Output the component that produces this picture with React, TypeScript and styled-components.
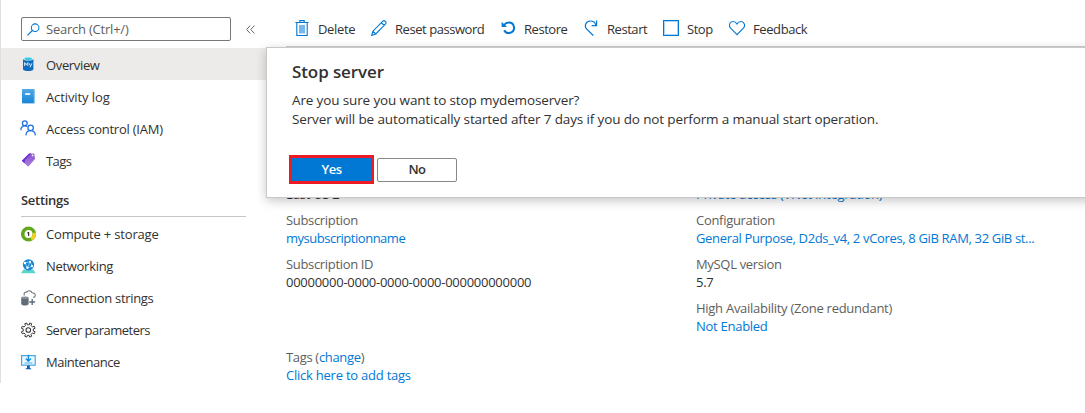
import React from "react";
import styled, { createGlobalStyle } from "styled-components";

const Global = createGlobalStyle`
  * { box-sizing: border-box; }
  body { margin: 0; background: #fff; overflow: hidden; }
  button { font: inherit; }
`;

const Page = styled.div`
  position: relative;
  display: flex;
  width: 1085px;
  height: 413px;
  overflow: hidden;
  background: #fff;
  color: #323130;
  font: 13px/18px "Open Sans", "Noto Sans", sans-serif;
`;

const Text = styled.span<{ $ls?: number }>`
  white-space: nowrap;
  letter-spacing: ${(p) => p.$ls ?? 0}px;
`;

const Caption = styled(Text)<{ $drop?: number }>`
  padding-top: ${(p) => p.$drop ?? 2}px;
`;

const Sidebar = styled.nav`
  width: 266px;
  height: 383px;
  border-left: 1px solid #e1dfdd;
  padding-top: 17px;
  flex: none;
`;

const SearchRow = styled.div`
  display: flex;
  align-items: center;
  height: 24px;
  margin: 0 0 7px 20px;
  gap: 15px;
`;

const SearchBox = styled.div`
  display: flex;
  align-items: center;
  width: 210px;
  height: 24px;
  padding-left: 5px;
  gap: 6px;
  border: 1px solid #7a7876;
  border-radius: 2px;
  color: #605e5c;
`;

const NavItem = styled.div<{ $active?: boolean }>`
  display: flex;
  align-items: center;
  height: 32px;
  padding-left: 19px;
  gap: 10px;
  background: ${(p) => (p.$active ? "#edebe9" : "transparent")};
`;

const SectionTitle = styled.div`
  display: flex;
  align-items: center;
  width: 225px;
  height: 41px;
  margin: 0 0 1px 20px;
  padding-top: 8px;
  border-bottom: 1px solid #c8c6c4;
  font-weight: 600;
`;

const Main = styled.main`
  flex: 1;
  padding-left: 20px;
`;

const Toolbar = styled.div`
  display: flex;
  align-items: center;
  height: 48px;
  padding: 10px 0 0 8px;
  border-bottom: 2px solid #d2d0ce;
`;

const Command = styled.div<{ $w: number }>`
  display: flex;
  align-items: center;
  flex: none;
  width: ${(p) => p.$w}px;
  gap: 8px;
`;

const Essentials = styled.div`
  display: grid;
  grid-template-columns: 410px 1fr;
  padding-top: 137px;
`;

const Field = styled.div<{ $before?: number; $height?: number }>`
  display: flex;
  flex-direction: column;
  height: ${(p) => p.$height ?? 44}px;
  margin-top: ${(p) => p.$before ?? 0}px;
`;

const Label = styled(Text)`
  color: #605e5c;
`;

const Link = styled(Text)`
  color: #0078d4;
`;

const Dialog = styled.section`
  position: absolute;
  left: 266px;
  top: 47px;
  width: 830px;
  height: 151px;
  padding: 13px 0 0 25px;
  background: #fff;
  border: 1px solid #c8c8c8;
  box-shadow: 0 3px 10px rgba(0, 0, 0, 0.22);
`;

const DialogTitle = styled.h2`
  margin: 0 0 8px;
  font-size: 17px;
  line-height: 22px;
  font-weight: 600;
`;

const DialogLine = styled.div`
  height: 19px;
  font-size: 13.5px;
  line-height: 19px;
`;

const Actions = styled.div`
  display: flex;
  align-items: center;
  gap: 3px;
  margin: 26px 0 0 -3px;
`;

const Highlight = styled.div`
  display: flex;
  width: 85px;
  height: 29px;
  border: 3px solid #ed1c24;
`;

const Button = styled.button<{ $primary?: boolean }>`
  width: ${(p) => (p.$primary ? 79 : 80)}px;
  height: ${(p) => (p.$primary ? 23 : 24)}px;
  padding: 0 0 1px;
  border: 1px solid ${(p) => (p.$primary ? "#0078d4" : "#8a8886")};
  border-radius: ${(p) => (p.$primary ? 0 : 2)}px;
  background: ${(p) => (p.$primary ? "#0078d4" : "#fff")};
  color: ${(p) => (p.$primary ? "#fff" : "#323130")};
  font-weight: 600;
  line-height: 20px;
  letter-spacing: -0.5px;
`;

const Svg = ({ size = 16, children }: { size?: number; children: React.ReactNode }) => (
  <svg width={size} height={size} viewBox="0 0 16 16" fill="none">
    {children}
  </svg>
);

const icons = {
  search: (
    <Svg size={13}>
      <circle cx="10" cy="5.8" r="4.7" stroke="#0078d4" strokeWidth="1.3" />
      <path d="M6.6 9.2.6 15.2" stroke="#0078d4" strokeWidth="1.4" />
    </Svg>
  ),
  mysql: (
    <Svg>
      <path d="M3 2.8v10.4c0 1 2.4 1.8 5.2 1.8s5.2-.8 5.2-1.8V2.8z" fill="#0f6cbd" />
      <ellipse cx="8.2" cy="2.8" rx="5.2" ry="1.8" fill="#e3f6fb" />
      <ellipse cx="8.2" cy="2.7" rx="4" ry="1.2" fill="#32c8e0" />
      <path d="M4.6 10V6.6l1.6 2.2 1.6-2.2V10M9.2 7.3l1.2 2.4m1.5-2.4-1.8 4" stroke="#d8ecfb" strokeWidth="1" />
    </Svg>
  ),
  log: (
    <Svg>
      <defs>
        <linearGradient id="logFill" x1="0" y1="0" x2="0" y2="1">
          <stop stopColor="#4fa9e6" />
          <stop offset="1" stopColor="#1b84d6" />
        </linearGradient>
      </defs>
      <rect x="2" y="1" width="13" height="14.8" rx="1" fill="#8cc4ec" />
      <rect x="2" y="1" width="11.8" height="14" rx=".8" fill="url(#logFill)" />
      <path d="M5.2 6h5" stroke="#fff" strokeWidth="1.7" />
    </Svg>
  ),
  people: (
    <Svg>
      <g stroke="#1f6fe0" strokeWidth="1.25">
        <circle cx="4.8" cy="3.3" r="2.4" />
        <circle cx="10.6" cy="7.9" r="2.7" />
        <path d="M.8 10.2C1 7.4 2.7 5.8 4.8 5.8c1 0 1.8.3 2.4.8M5.9 15.4c.2-3 2.2-4.7 4.7-4.7s4.5 1.7 4.8 4.7" />
      </g>
    </Svg>
  ),
  tag: (
    <Svg>
      <defs>
        <linearGradient id="tagFill" x1="0" y1="0" x2="0" y2="1">
          <stop stopColor="#8a4fd0" />
          <stop offset="1" stopColor="#a983dc" />
        </linearGradient>
      </defs>
      <path d="M9 2 14.2 1.4 15 7 8.2 14.8 2 9z" fill="url(#tagFill)" />
      <path d="M9 1.6 11.4.8 5 8.2 4.6 11.2 1.8 8.8z" fill="#6f2fd0" />
      <circle cx="12.6" cy="3.4" r=".9" fill="#fff" />
    </Svg>
  ),
  compute: (
    <Svg>
      <circle cx="8.5" cy="8" r="5.8" stroke="#62a81a" strokeWidth="3.6" />
      <path d="M14.2 6.8c.5 3-.8 5.3-3 6.3" stroke="#f5cf1a" strokeWidth="3.2" />
      <path d="M8.6 5.9v4.2M7.6 7.3l1-1.2" stroke="#323130" strokeWidth="1.2" />
    </Svg>
  ),
  network: (
    <Svg>
      <path d="M3.5 11.5h9.8l2.4 3.7H1z" fill="#5cd5c9" />
      <circle cx="8.5" cy="6.8" r="5.6" fill="#1784d8" />
      <path d="m5 4.8 5-1 2.2 4.2-4.8 2zM10 3.8 7.4 10" stroke="#9cddf8" strokeWidth=".8" />
      <g fill="#fff">
        <circle cx="5" cy="5" r="1.2" />
        <circle cx="10.1" cy="3.8" r="1" />
        <circle cx="12" cy="8.2" r="1.1" />
        <circle cx="7.4" cy="9.8" r="1.2" />
      </g>
    </Svg>
  ),
  strings: (
    <Svg>
      <path d="M4.4 5.4C3.4 3.3 5 1.8 6.8 2.1 7.8.4 11 .2 12 2.7c2.3.1 3.5 1.5 3.2 3.1-.2 1-1.1 1.6-2.1 1.7" stroke="#69737e" strokeWidth="1.1" />
      <path d="M1.2 7.7v6.2c0 .9 1.7 1.5 3.7 1.5s3.7-.6 3.7-1.5V7.7z" fill="#606d79" />
      <ellipse cx="4.9" cy="7.7" rx="3.7" ry="1.2" fill="#86909b" />
      <path d="M9.2 12h6M12.2 9v6" stroke="#606d79" strokeWidth="1.4" />
    </Svg>
  ),
  gear: (
    <Svg>
      <circle cx="8.3" cy="8" r="2.3" stroke="#3b3a39" strokeWidth="1.1" />
      <path d="m6.9 1 .4 1.8h2L9.7 1l2.1.8-.8 1.7 1.5 1.5 1.7-.8.9 2.1-1.8.6v2.2l1.8.6-.9 2.1-1.7-.8-1.5 1.5.8 1.7-2.1.9-.6-1.8H7.4l-.6 1.8-2.1-.9.8-1.7L4 11l-1.7.8-.9-2.1 1.8-.6V6.9l-1.8-.6.9-2.1L4 5l1.5-1.5-.8-1.7z" stroke="#3b3a39" strokeWidth="1" />
    </Svg>
  ),
  maintenance: (
    <Svg>
      <rect x="1.6" y="1.6" width="13.6" height="9.6" fill="#edf8ff" stroke="#48a7e8" strokeWidth="1.2" />
      <path d="M8.4 .8V7M5.9 4.6l2.5 2.6 2.5-2.6" stroke="#1490df" strokeWidth="1.5" />
      <path d="M4.5 9h8" stroke="#50b0e8" />
      <path d="M7 11.6h2.8v2.2l1.9 1.5H5.1L7 13.8z" fill="#165ca8" />
    </Svg>
  ),
  trash: (
    <Svg>
      <path d="M1.4 2.5h13.2M5.8 2.2V.6h4.4v1.6M2.8 2.5v13h10.4v-13" stroke="#0078d4" strokeWidth="1.1" />
      <rect x="5" y="5" width="6" height="8.4" fill="#76b7ec" />
    </Svg>
  ),
  pencil: (
    <Svg>
      <path d="M.7 15.4 1.9 11.2 11.6 1.4c.8-.8 2-.8 2.8 0s.8 2 0 2.8L4.8 14zM10.4 2.7l2.8 2.8M1.9 11.2 4.8 14" stroke="#0078d4" strokeWidth="1.1" />
    </Svg>
  ),
  restore: (
    <Svg>
      <path d="M4 5C5.3 3.3 7 2.6 8.9 2.6a5.2 5.2 0 1 1-4.7 7.6" stroke="#0078d4" strokeWidth="2" />
      <path d="M1.6 1.7v5.4H7z" fill="#0078d4" />
    </Svg>
  ),
  restart: (
    <Svg>
      <path d="M10.3 15.5 3.8 9.2C.8 6 2.8 1 7.4 1c2.8 0 4.8 1.7 5.4 4" stroke="#0078d4" strokeWidth="1.2" />
      <path d="M13.6.6v5H8.6" stroke="#0078d4" strokeWidth="1.2" />
    </Svg>
  ),
  stop: (
    <Svg>
      <rect x="1.5" y="1.5" width="13" height="13" stroke="#a9d3f2" />
      <rect x=".5" y=".5" width="15" height="15" stroke="#0078d4" />
    </Svg>
  ),
  heart: (
    <Svg>
      <path d="M8 14.6 1.6 8.2C-.8 5.5.8 1.5 4 1.5c1.9 0 3.2 1 4 2.5.8-1.5 2.1-2.5 4-2.5 3.2 0 4.8 4 2.4 6.7z" stroke="#0078d4" strokeWidth="1.1" />
    </Svg>
  ),
  collapse: (
    <Svg size={9}>
      <path d="M7.5 1 1 8l6.5 7M15 1 8.5 8l6.5 7" stroke="#605e5c" strokeWidth="1.7" />
    </Svg>
  ),
};

type Entry = { icon: keyof typeof icons; text: string; ls: number; active?: boolean };

const general: Entry[] = [
  { icon: "mysql", text: "Overview", ls: -0.35, active: true },
  { icon: "log", text: "Activity log", ls: -0.1 },
  { icon: "people", text: "Access control (IAM)", ls: -0.23 },
  { icon: "tag", text: "Tags", ls: -0.6 },
];

const settings: Entry[] = [
  { icon: "compute", text: "Compute + storage", ls: -0.18 },
  { icon: "network", text: "Networking", ls: -0.3 },
  { icon: "strings", text: "Connection strings", ls: -0.32 },
  { icon: "gear", text: "Server parameters", ls: -0.52 },
  { icon: "maintenance", text: "Maintenance", ls: -0.45 },
];

const commands: (Entry & { w: number })[] = [
  { icon: "trash", text: "Delete", ls: -0.35, w: 77 },
  { icon: "pencil", text: "Reset password", ls: -0.45, w: 129 },
  { icon: "restore", text: "Restore", ls: -0.45, w: 83 },
  { icon: "restart", text: "Restart", ls: -0.45, w: 80 },
  { icon: "stop", text: "Stop", ls: -0.45, w: 66 },
  { icon: "heart", text: "Feedback", ls: -0.4, w: 90 },
];

const NavList = ({ items, drop }: { items: Entry[]; drop?: number }) => (
  <>
    {items.map((i) => (
      <NavItem key={i.text} $active={i.active}>
        {icons[i.icon]}
        <Caption $ls={i.ls} $drop={drop}>
          {i.text}
        </Caption>
      </NavItem>
    ))}
  </>
);

export default function App() {
  return (
    <Page>
      <Global />
      <Sidebar>
        <SearchRow>
          <SearchBox>
            {icons.search}
            <Text $ls={-0.22}>Search (Ctrl+/)</Text>
          </SearchBox>
          {icons.collapse}
        </SearchRow>
        <NavList items={general} />
        <SectionTitle>
          <Text $ls={-0.3}>Settings</Text>
        </SectionTitle>
        <NavList items={settings} drop={0} />
      </Sidebar>
      <Main>
        <Toolbar>
          {commands.map((c) => (
            <Command key={c.text} $w={c.w}>
              {icons[c.icon]}
              <Caption $ls={c.ls}>{c.text}</Caption>
            </Command>
          ))}
        </Toolbar>
        <Essentials>
          <div>
            <Field $height={26}>
              <Text $ls={-0.3}>East US 2</Text>
            </Field>
            <Field>
              <Label $ls={-0.33}>Subscription</Label>
              <Link $ls={-0.48}>mysubscriptionname</Link>
            </Field>
            <Field>
              <Label $ls={-0.33}>Subscription ID</Label>
              <Text $ls={-0.26}>00000000-0000-0000-0000-000000000000</Text>
            </Field>
            <Field $before={49}>
              <Label $ls={-0.33}>
                Tags (<Link $ls={-0.33}>change</Link>)
              </Label>
              <Link $ls={-0.23}>Click here to add tags</Link>
            </Field>
          </div>
          <div>
            <Field $height={26}>
              <Link $ls={-0.28}>Private access (VNet Integration)</Link>
            </Field>
            <Field>
              <Label $ls={-0.3}>Configuration</Label>
              <Link $ls={-0.34}>General Purpose, D2ds_v4, 2 vCores, 8 GiB RAM, 32 GiB st...</Link>
            </Field>
            <Field>
              <Label $ls={-0.33}>MySQL version</Label>
              <Text $ls={-0.3}>5.7</Text>
            </Field>
            <Field>
              <Label $ls={-0.27}>High Availability (Zone redundant)</Label>
              <Link $ls={-0.27}>Not Enabled</Link>
            </Field>
          </div>
        </Essentials>
      </Main>
      <Dialog>
        <DialogTitle>
          <Text $ls={-0.1}>Stop server</Text>
        </DialogTitle>
        <DialogLine>
          <Text $ls={-0.13}>Are you sure you want to stop mydemoserver?</Text>
        </DialogLine>
        <DialogLine>
          <Text $ls={-0.13}>Server will be automatically started after 7 days if you do not perform a manual start operation.</Text>
        </DialogLine>
        <Actions>
          <Highlight>
            <Button $primary>Yes</Button>
          </Highlight>
          <Button>No</Button>
        </Actions>
      </Dialog>
    </Page>
  );
}
